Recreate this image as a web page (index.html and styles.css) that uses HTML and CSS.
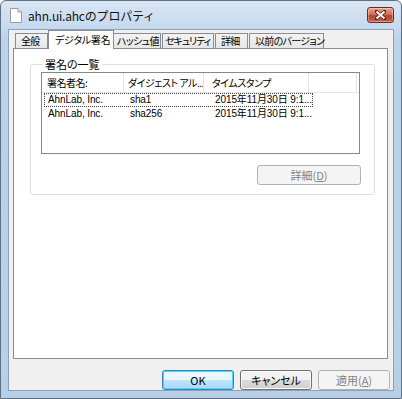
FILE: index.html
```html
<!DOCTYPE html>
<html lang="ja">
<head>
  <meta charset="UTF-8" />
  <title>ahn.ui.ahcのプロパティ</title>
  <link rel="stylesheet" href="styles.css">
</head>
<body>
  <div class="window">
    <div class="titlebar">
      <svg class="doc-icon" width="12" height="15" viewBox="0 0 12 15">
        <path d="M0.5 0.5 H8 L11.5 4 V14.5 H0.5 Z" fill="#fff" stroke="#9a9a9a"/>
        <path d="M8 0.5 V4 H11.5" fill="#e8e8e8" stroke="#9a9a9a"/>
      </svg>
      <span class="title">ahn.ui.ahcのプロパティ</span>
      <button class="close-btn" aria-label="閉じる">
        <svg width="11" height="10" viewBox="0 0 11 10">
          <path d="M1.5 1.5 L9.5 8.5 M9.5 1.5 L1.5 8.5" stroke="#5a1a10" stroke-width="3.4" stroke-linecap="square"/>
          <path d="M1.5 1.5 L9.5 8.5 M9.5 1.5 L1.5 8.5" stroke="#fff" stroke-width="2"/>
        </svg>
      </button>
    </div>

    <div class="client">
      <ul class="tabs">
        <li class="tab t1">全般</li>
        <li class="tab t2 active">デジタル署名</li>
        <li class="tab t3">ハッシュ値</li>
        <li class="tab t4">セキュリティ</li>
        <li class="tab t5">詳細</li>
        <li class="tab t6">以前のバージョン</li>
      </ul>

      <div class="panel">
        <fieldset class="group">
          <legend>署名の一覧</legend>
          <div class="list">
            <div class="list-row list-head">
              <span class="col c1">署名者名:</span>
              <span class="col c2">ダイジェスト アル...</span>
              <span class="col c3">タイムスタンプ</span>
              <span class="col c4"></span>
            </div>
            <div class="list-row focused">
              <span class="col c1">AhnLab, Inc.</span>
              <span class="col c2">sha1</span>
              <span class="col c3">2015年11月30日 9:1...</span>
            </div>
            <div class="list-row">
              <span class="col c1">AhnLab, Inc.</span>
              <span class="col c2">sha256</span>
              <span class="col c3">2015年11月30日 9:1...</span>
            </div>
          </div>
          <div class="group-actions">
            <button class="btn disabled">詳細(<u>D</u>)</button>
          </div>
        </fieldset>
      </div>

      <div class="dialog-actions">
        <button class="btn default">OK</button>
        <button class="btn">キャンセル</button>
        <button class="btn disabled">適用(<u>A</u>)</button>
      </div>
    </div>
  </div>
</body>
</html>
```

FILE: styles.css
```css
body {
  margin: 0;
  font-family: "Noto Sans CJK JP", "Liberation Sans", sans-serif;
  font-size: 11px;
  font-feature-settings: "palt";
  color: #000;
  background: #fff;
}
.window {
  width: 402px;
  height: 399px;
  box-sizing: border-box;
  border: 1px solid #5f6f84;
  border-radius: 6px 6px 0 0;
  background: linear-gradient(#d9e6f4, #bcd2ea 40px, #b9cfe8);
  display: flex;
  flex-direction: column;
}
.titlebar {
  height: 29px;
  display: flex;
  align-items: center;
  padding: 0 7px 0 9px;
}
.doc-icon {
  margin-top: 1px;
}
.title {
  margin-left: 6px;
  font-size: 12px;
  color: #111;
  font-feature-settings: normal;
  letter-spacing: -0.2px;
}
.close-btn {
  margin-left: auto;
  margin-top: -1px;
  width: 27px;
  height: 16px;
  padding: 0;
  border: 1px solid #6b2a22;
  border-radius: 3px;
  background: linear-gradient(#e8a493, #d2705a 45%, #b8412a 55%, #c9614a);
  display: flex;
  align-items: center;
  justify-content: center;
  box-shadow: inset 0 0 0 1px rgb(255 255 255 / 0.35);
}
.client {
  flex: 1;
  margin: 0 7px 7px;
  background: #f0f0f0;
  border: 1px solid #8aa1bb;
  padding: 1px 5px 0 4px;
  display: flex;
  flex-direction: column;
}
.tabs {
  list-style: none;
  margin: 0;
  padding: 0 0 0 2px;
  display: flex;
  align-items: flex-end;
  height: 17px;
  position: relative;
  z-index: 1;
}
.tab {
  box-sizing: border-box;
  height: 15px;
  line-height: 14px;
  padding-left: 3px;
  margin-right: 1px;
  border: 1px solid #898c95;
  border-bottom: none;
  background: linear-gradient(#f3f3f3, #e6e6e6);
  white-space: nowrap;
  font-size: 10px;
  letter-spacing: -0.7px;
}
.t1 { width: 33px; padding-left: 5px; }
.t3 { width: 48px; }
.t4 { width: 52px; padding-left: 2px; letter-spacing: -1.1px; }
.t5 { width: 33px; padding-left: 5px; }
.t6 { width: 75px; padding-left: 5px; }
.tab.active {
  width: 66px;
  height: 19px;
  line-height: 17px;
  margin: 0 0 0 -1px;
  padding-left: 6px;
  background: #fff;
  position: relative;
  top: 1px;
  letter-spacing: -0.3px;
}
.tab.active + .tab {
  margin-left: -1px;
}
.panel {
  height: 311px;
  box-sizing: border-box;
  background: #fff;
  border: 1px solid #898c95;
  padding: 9px 12px 0 16px;
}
.group {
  margin: 0;
  height: 137px;
  box-sizing: border-box;
  border: 1px solid #dcdfe3;
  border-radius: 3px;
  padding: 2px 14px 0 10px;
}
.group legend {
  padding: 0 2px;
  margin-left: 2px;
  line-height: 12px;
}
.list {
  height: 82px;
  box-sizing: border-box;
  border: 1px solid #828790;
  background: #fff;
}
.list-row {
  display: flex;
  height: 14px;
  line-height: 12px;
  margin: 0 0 0 2px;
  width: 269px;
  border: 1px dotted transparent;
  box-sizing: border-box;
}
.list-head {
  height: 20px;
  line-height: 20px;
  width: auto;
  margin: 0;
  border: none;
  border-bottom: 1px solid #e5e5e5;
}
.list-head .col {
  border-right: 1px solid #e5e5e5;
}
.focused {
  border-color: #444;
}
.col {
  box-sizing: border-box;
  white-space: nowrap;
  overflow: hidden;
  padding-left: 3px;
  font-family: "Liberation Sans", "Noto Sans CJK JP", sans-serif;
  font-size: 10px;
  letter-spacing: -0.1px;
}
.list-head .col {
  font-family: "Noto Sans CJK JP", sans-serif;
  font-size: 10px;
  letter-spacing: -0.5px;
}
.list-head .c1 { width: 83px; padding-left: 5px; }
.list-head .c2 { width: 80px; padding-left: 4px; }
.list-head .c3 { width: 108px; padding-left: 8px; }
.list-head .c4 { width: 48px; }
.list-row .c1 { width: 82px; }
.list-row .c2 { width: 80px; }
.list-row .c3 { width: 105px; padding-left: 8px; }
.group-actions {
  display: flex;
  justify-content: flex-end;
  margin: 11px -1px 0 0;
}
.btn {
  font-family: "Noto Sans CJK JP", sans-serif;
  font-feature-settings: "palt";
  font-size: 11px;
  color: #000;
  height: 20px;
  padding: 0;
  border: 1px solid #707070;
  border-radius: 3px;
  background: linear-gradient(#f2f2f2 50%, #dddddd 50%, #cfcfcf);
  box-shadow: inset 0 0 0 1px #fcfcfc;
}
.group-actions .btn {
  width: 104px;
}
.btn.disabled {
  color: #838383;
  border-color: #adb2b5;
  background: #f4f4f4;
  box-shadow: none;
}
.btn.default {
  border-color: #3c7fb1;
  box-shadow: inset 0 0 0 1px #48d8fb;
  background: linear-gradient(#eaf6fd 50%, #bee6fd 50%, #a7d9f5);
}
.btn u {
  text-decoration: underline;
}
.dialog-actions {
  display: flex;
  justify-content: flex-end;
  gap: 6px;
  margin: 11px -2px 0 0;
}
.dialog-actions .btn {
  width: 72px;
}
```
